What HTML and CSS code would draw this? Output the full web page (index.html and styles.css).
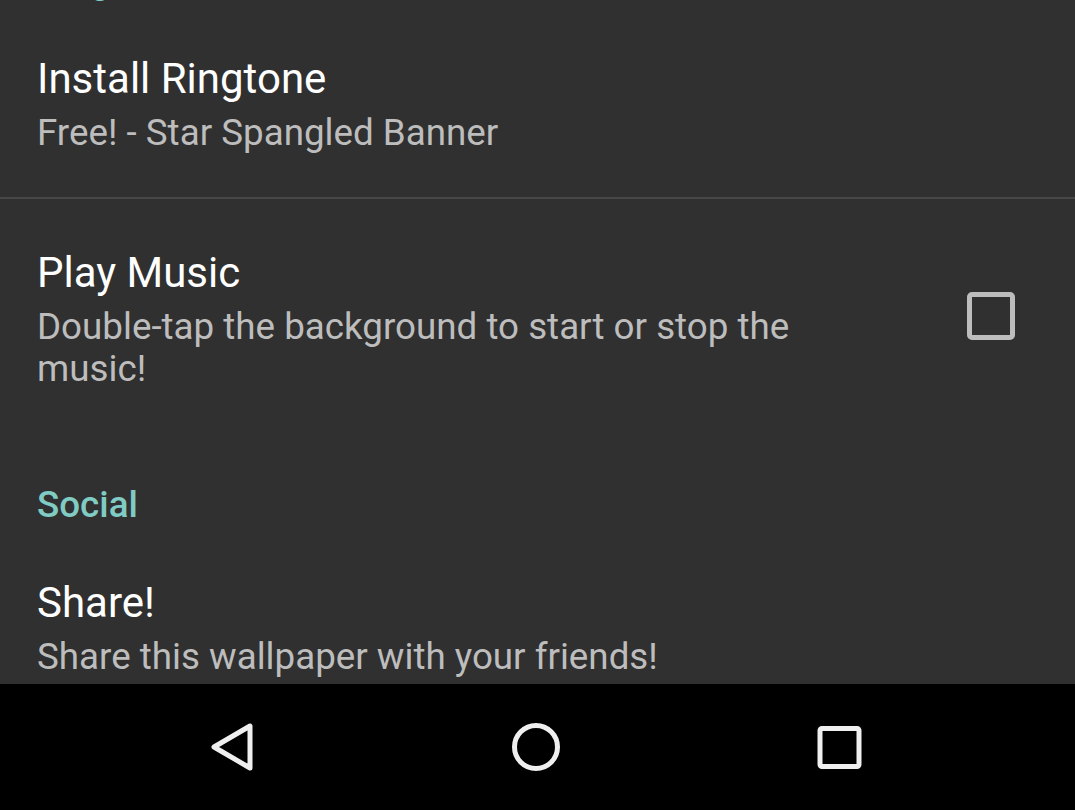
FILE: index.html
```html
<!DOCTYPE html>
<html lang="en">
<head>
<meta charset="utf-8">
<title>Settings</title>
<link rel="stylesheet" href="styles.css">
</head>
<body>
<div class="screen">
  <div class="list">
    <div class="category category-first">Ringtone</div>
    <div class="pref">
      <div class="pref-text">
        <div class="pref-title">Install Ringtone</div>
        <div class="pref-summary">Free! - Star Spangled Banner</div>
      </div>
    </div>
    <div class="divider"></div>
    <div class="pref pref-check">
      <div class="pref-text">
        <div class="pref-title">Play Music</div>
        <div class="pref-summary">Double-tap the background to start or stop the music!</div>
      </div>
      <div class="checkbox"></div>
    </div>
    <div class="category">Social</div>
    <div class="pref">
      <div class="pref-text">
        <div class="pref-title">Share!</div>
        <div class="pref-summary">Share this wallpaper with your friends!</div>
      </div>
    </div>
  </div>
  <div class="navbar">
    <div class="nav-btn">
      <svg width="56" height="56" viewBox="0 0 56 56"><polygon points="10,28 46,7 46,49" fill="none" stroke="#efefef" stroke-width="5" stroke-linejoin="round"/></svg>
    </div>
    <div class="nav-btn">
      <svg width="56" height="56" viewBox="0 0 56 56"><circle cx="28" cy="28" r="21.5" fill="none" stroke="#efefef" stroke-width="5"/></svg>
    </div>
    <div class="nav-btn">
      <svg width="56" height="56" viewBox="0 0 56 56"><rect x="8" y="9.5" width="39" height="38" rx="2" fill="none" stroke="#efefef" stroke-width="5"/></svg>
    </div>
  </div>
</div>
</body>
</html>
```

FILE: styles.css
```css
html, body {
  margin: 0;
  padding: 0;
  height: 100%;
  overflow: hidden;
  background: #303030;
}

.screen {
  display: flex;
  flex-direction: column;
  height: 810px;
  width: 1075px;
  font-family: Roboto, "Noto Sans", sans-serif;
}

.list {
  flex: 1;
  overflow: hidden;
  background: #303030;
}

.category {
  padding: 50px 37px 2px;
  font-size: 36.75px;
  line-height: 44px;
  font-weight: 500;
  color: #80cbc4;
}

.category-first {
  padding-top: 0;
  margin-top: -41px;
}

.pref {
  display: flex;
  align-items: center;
  padding: 48px 60px 43px 37px;
}

.pref-text {
  flex: 1;
  min-width: 0;
}

.pref-title {
  font-size: 42px;
  line-height: 52px;
  color: #ffffff;
}

.pref-summary {
  margin-top: 7px;
  font-size: 36.75px;
  line-height: 42px;
  color: #bdbdbd;
}

.divider {
  height: 2px;
  background: #474747;
}

.checkbox {
  flex-shrink: 0;
  width: 48px;
  height: 48px;
  box-sizing: border-box;
  margin-left: 72px;
  margin-bottom: 5px;
  border: 5px solid #bdbdbd;
  border-radius: 5px;
}

.navbar {
  flex-shrink: 0;
  height: 126px;
  background: #000000;
  display: grid;
  grid-template-columns: repeat(3, 304px);
  justify-content: center;
  align-items: center;
  padding-right: 4px;
}

.nav-btn {
  display: flex;
  justify-content: center;
  align-items: center;
}

.nav-btn svg {
  display: block;
}
```
